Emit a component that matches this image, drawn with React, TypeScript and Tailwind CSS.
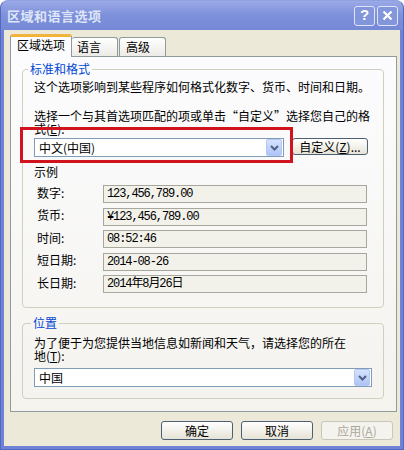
import type { ReactNode } from 'react'

const samples = [
  { label: '数字:', value: '123,456,789.00' },
  { label: '货币:', value: '¥123,456,789.00' },
  { label: '时间:', value: '08:52:46' },
  { label: '短日期:', value: '2014-08-26' },
  { label: '长日期:', value: '2014年8月26日' },
]

function DropArrow() {
  return (
    <div className="w-[16px] h-[17px] border border-[#b5c8f3] rounded-[2px] bg-gradient-to-b from-[#d6e2fd] to-[#aec4f7] flex items-center justify-center">
      <svg width="9" height="6" viewBox="0 0 9 6">
        <path d="M1 1 L4.5 4.5 L8 1" fill="none" stroke="#4d6185" strokeWidth="2" />
      </svg>
    </div>
  )
}

function Combo({ value, width }: { value: string; width: string }) {
  return (
    <div className={`${width} h-[19px] border border-[#7f9db9] bg-white flex items-center justify-between pl-[4px] pr-px`}>
      <span className="leading-[14px]">{value}</span>
      <DropArrow />
    </div>
  )
}

function Group({ title, height, legendOffset, children }: { title: string; height: string; legendOffset: string; children: ReactNode }) {
  return (
    <fieldset className={`${height} border border-[#d0d0bf] rounded-[4px] p-0`}>
      <legend className={`${legendOffset} px-[2px] leading-[14px] text-[#0046d5]`}>{title}</legend>
      <div className="pl-[11px]">{children}</div>
    </fieldset>
  )
}

function Button({ children, disabled }: { children: ReactNode; disabled?: boolean }) {
  return (
    <div
      className={
        disabled
          ? 'w-[72px] h-[19px] rounded-[3px] border border-[#c9c7ba] bg-[#f4f3ee] text-[#aca899] flex items-center justify-center'
          : 'w-[72px] h-[19px] rounded-[3px] border border-[#4f5f73] bg-gradient-to-b from-white to-[#e6e3d6] flex items-center justify-center'
      }
    >
      {children}
    </div>
  )
}

export default function App() {
  return (
    <div className="w-[404px] h-[450px] rounded-t-[8px] bg-[#6f83d6] border border-[#5568bf] border-t-[#8fa1e2] flex flex-col font-['Noto_Sans_CJK_SC',sans-serif] text-[12px] text-black overflow-hidden">

      {/* ── Barre de titre ── */}
      <div className="h-[29px] flex items-center justify-between pl-[6px] pr-[5px] bg-gradient-to-b from-[#9aa9e6] via-[#7d90da] to-[#7689d6]">
        <span className="text-[13px] font-bold text-[#dfe6f8] tracking-[0.5px]">区域和语言选项</span>
        <div className="flex gap-[2px]">
          <div className="w-[21px] h-[20px] rounded-[3px] border border-[#dfe4f7] bg-[#8396dc] flex items-center justify-center text-[15px] font-bold text-white font-['Liberation_Sans',sans-serif]">?</div>
          <div className="w-[21px] h-[20px] rounded-[3px] border border-[#dfe4f7] bg-[#8396dc] flex items-center justify-center">
            <svg width="11" height="11" viewBox="0 0 11 11">
              <path d="M1.5 1.5 L9.5 9.5 M9.5 1.5 L1.5 9.5" stroke="white" strokeWidth="2.2" />
            </svg>
          </div>
        </div>
      </div>

      {/* ── Corps ── */}
      <div className="mx-[3px] mb-[3px] flex-1 bg-[#ece9d8] flex flex-col pl-[6px] pr-[3px] pt-[4px]">

        {/* onglets */}
        <div className="h-[22px] flex items-end">
          <div className="w-[62px] h-[23px] -mb-px relative z-10 bg-[#fcfcfe] border border-[#919b9c] border-b-0 rounded-t-[3px] border-t-[3px] border-t-[#f0b43c] pl-[6px] leading-[16px]">区域选项</div>
          <div className="w-[46px] h-[19px] bg-gradient-to-b from-white to-[#ecebe6] border border-[#919b9c] border-b-0 border-l-0 rounded-t-[3px] pl-[5px] leading-[18px]">语言</div>
          <div className="w-[47px] h-[19px] ml-px bg-gradient-to-b from-white to-[#ecebe6] border border-[#919b9c] border-b-0 rounded-t-[3px] pl-[6px] leading-[18px]">高级</div>
        </div>

        {/* panneau */}
        <div className="h-[356px] border border-[#919b9c] bg-gradient-to-b from-[#fcfcfe] to-[#f4f3ee] pl-[11px] pr-[12px] pt-[5px]">

          <Group title="标准和格式" height="h-[246px]" legendOffset="ml-[5px]">
            <div className="relative">
              <div className="mt-[4px] leading-[14px]">这个选项影响到某些程序如何格式化数字、货币、时间和日期。</div>
              <div className="mt-[15px] leading-[13px]">
                <div className="h-[13px]">选择一个与其首选项匹配的项或单击“自定义”选择您自己的格</div>
                <div className="h-[13px]">式(<u className="inline-block h-[13px] leading-[13px]">E</u>):</div>
              </div>
              <div className="mt-[3px] flex items-start gap-[8px]">
                <Combo value="中文(中国)" width="w-[250px]" />
                <div className="w-[76px] h-[17px] rounded-[3px] border border-[#4f5f73] bg-gradient-to-b from-white to-[#e6e3d6] flex items-center justify-center leading-[14px]">
                  自定义(<u>Z</u>)...
                </div>
              </div>
              <div className="mt-[8px] leading-[14px]">示例</div>
              <div className="mt-[6px] flex flex-col gap-[4.5px]">
                {samples.map(s => (
                  <div key={s.label} className="h-[18px] flex items-center">
                    <span className="w-[69px] pl-[3px] leading-[14px] -mt-[3px]">{s.label}</span>
                    <div className="w-[264px] h-[18px] border border-[#a8a79f] bg-[#f2f1ea] pl-[3px] flex items-center font-['Liberation_Mono','Noto_Sans_CJK_SC',monospace] text-[12px] tracking-[-1.1px]">
                      {s.value}
                    </div>
                  </div>
                ))}
              </div>

              {/* encadré rouge */}
              <div className="absolute left-[-14px] top-[47px] w-[273px] h-[36px] border-[3px] border-[#d0131c]" />
            </div>
          </Group>

          <div className="mt-[8px]">
            <Group title="位置" height="h-[83px]" legendOffset="ml-[8px]">
              <div className="mt-[6px] leading-[13px]">
                <div className="h-[13px]">为了便于为您提供当地信息如新闻和天气，请选择您的所在</div>
                <div className="h-[13px]">地(<u className="inline-block h-[13px] leading-[13px]">T</u>):</div>
              </div>
              <div className="mt-[6px]">
                <Combo value="中国" width="w-[338px]" />
              </div>
            </Group>
          </div>
        </div>

        {/* boutons */}
        <div className="mt-[9px] flex justify-end gap-[8px] pr-[4px]">
          <Button>确定</Button>
          <Button>取消</Button>
          <Button disabled>应用(<u>A</u>)</Button>
        </div>
      </div>
    </div>
  )
}
